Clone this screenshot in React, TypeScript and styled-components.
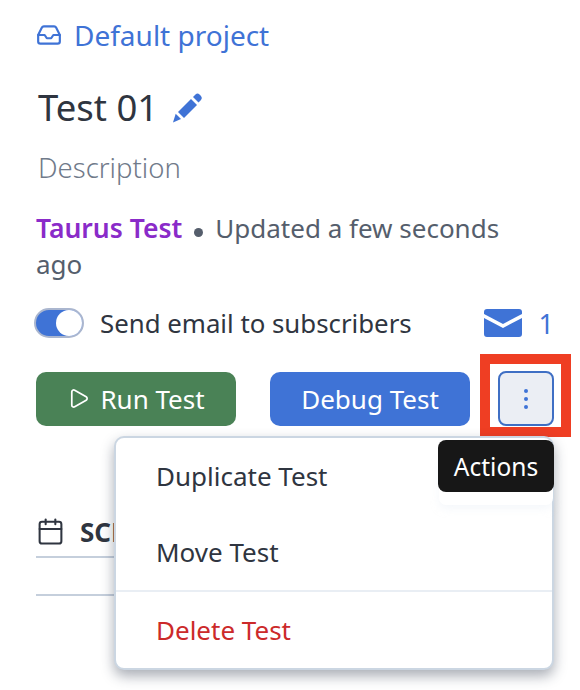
import { createGlobalStyle, styled } from "styled-components"
import { Calendar, Inbox, Play } from "lucide-react"

const GlobalStyle = createGlobalStyle`
  html, body {
    margin: 0;
    padding: 0;
    background: #fff;
    overflow: hidden;
  }
  body {
    font-family: "Noto Sans", "Open Sans", sans-serif;
  }
`

const Page = styled.div`
  position: relative;
  width: 580px;
  height: 690px;
  box-sizing: border-box;
  padding: 16px 26px 0 36px;
  overflow: hidden;
`

const ProjectLink = styled.a`
  display: flex;
  align-items: center;
  gap: 12px;
  height: 38px;
  color: #3f73d6;
  font-size: 28px;
`

const TitleRow = styled.div`
  display: flex;
  align-items: center;
  gap: 15px;
  margin: 30px 0 0 2px;
  height: 46px;
`

const Title = styled.h1`
  margin: 0;
  font-size: 36.5px;
  font-weight: 400;
  color: #2f3540;
`

const Description = styled.div`
  margin: 20px 0 0 2px;
  font-size: 27.5px;
  line-height: 36px;
  font-weight: 300;
  color: #707a8a;
`

const Meta = styled.div`
  margin-top: 24px;
  width: 490px;
  font-size: 26px;
  line-height: 36px;
  color: #555e6c;
`

const TestType = styled.span`
  color: #8a2bc9;
  font-weight: 600;
  font-size: 26.5px;
`

const Dot = styled.span`
  display: inline-block;
  width: 9px;
  height: 9px;
  margin: 0 12px 0 12px;
  border-radius: 50%;
  background: #555e6c;
  vertical-align: 1px;
`

const SubscribeRow = styled.div`
  display: flex;
  align-items: center;
  margin-top: 23px;
  height: 36px;
`

const Toggle = styled.div`
  display: flex;
  justify-content: flex-end;
  width: 50px;
  height: 30px;
  margin-left: -2px;
  box-sizing: border-box;
  border: 2px solid #aab6cf;
  border-radius: 15px;
  background: #3f73d6;
`

const Knob = styled.div`
  width: 26px;
  height: 26px;
  border-radius: 50%;
  background: #fff;
`

const SubscribeLabel = styled.span`
  margin-left: 16px;
  font-size: 25.8px;
  color: #2f3540;
`

const SubscriberCount = styled.div`
  display: flex;
  align-items: center;
  gap: 17px;
  margin-left: auto;
  color: #3f73d6;
  font-size: 27px;
`

const ButtonRow = styled.div`
  display: flex;
  align-items: center;
  margin-top: 30px;
`

const Button = styled.button<{ $bg: string; $width: number; $offset?: number }>`
  display: flex;
  align-items: center;
  justify-content: center;
  gap: 10px;
  width: ${(p) => p.$width}px;
  height: 54px;
  margin-left: ${(p) => p.$offset ?? 0}px;
  padding: 0;
  border: 0;
  border-radius: 10px;
  background: ${(p) => p.$bg};
  color: #fff;
  font-family: inherit;
  font-size: 26px;
`

const ActionsButton = styled.button`
  position: relative;
  display: flex;
  align-items: center;
  justify-content: center;
  width: 56px;
  height: 55px;
  margin-left: 28px;
  padding: 0;
  border: 2px solid #3f6fc4;
  border-radius: 8px;
  background: #ebeef4;

  &::after {
    content: "";
    position: absolute;
    inset: -19px -19px -13px -20px;
    border: 10px solid #ef3e23;
  }
`

const ScheduleHeader = styled.div`
  display: flex;
  align-items: center;
  gap: 15px;
  margin-top: 76px;
  height: 56px;
  padding-top: 5px;
  border-bottom: 2px solid #c5cfdc;
  box-sizing: border-box;
  color: #2f3540;
  font-size: 26px;
  font-weight: 700;
`

const ScheduleBody = styled.div`
  height: 38px;
  box-sizing: border-box;
  border-bottom: 2px solid #c5cfdc;
`

const Menu = styled.div`
  position: absolute;
  left: 114px;
  top: 436px;
  width: 440px;
  height: 234px;
  box-sizing: border-box;
  border: 2px solid #cbd6e2;
  border-radius: 10px;
  background: #fff;
  box-shadow: 0 6px 13px rgba(40, 50, 70, 0.4);
`

const MenuItem = styled.div<{ $danger?: boolean }>`
  display: flex;
  align-items: center;
  height: 76px;
  padding-left: 40px;
  font-size: 26px;
  color: ${(p) => (p.$danger ? "#cc2a2a" : "#2f3540")};
`

const MenuDivider = styled.div`
  height: 2px;
  background: #e9eef4;
`

const Tooltip = styled.div`
  position: absolute;
  left: 438px;
  top: 440px;
  display: flex;
  align-items: center;
  justify-content: center;
  width: 116px;
  height: 52px;
  border-radius: 8px;
  background: #171717;
  color: #fff;
  font-size: 24.5px;
  box-shadow: 0 14px 0 -1px #fff, 0 18px 10px -2px rgba(220, 228, 240, 0.35);
`

export default function App() {
  return (
    <Page>
      <GlobalStyle />
      <ProjectLink>
        <Inbox size={26} strokeWidth={2} />
        Default project
      </ProjectLink>
      <TitleRow>
        <Title>Test 01</Title>
        <svg width="31" height="31" viewBox="0 0 31 31" fill="#3f73d6">
          <path d="M0 30.5 2.7 21.7 8 27z" />
          <path d="M5 20 18 7l6 6-13 13z" />
          <path d="M20 5l2.5-2.5a3 3 0 0 1 4 0l1.5 1.5a3 3 0 0 1 0 4L25.5 10.5z" />
        </svg>
      </TitleRow>
      <Description>Description</Description>
      <Meta>
        <TestType>Taurus Test</TestType>
        <Dot />
        Updated a few seconds ago
      </Meta>
      <SubscribeRow>
        <Toggle>
          <Knob />
        </Toggle>
        <SubscribeLabel>Send email to subscribers</SubscribeLabel>
        <SubscriberCount>
          <svg width="38" height="28" viewBox="0 0 38 28" fill="#3f73d6">
            <path d="M3 0h32a3 3 0 0 1 3 3v2L19 15 0 5V3a3 3 0 0 1 3-3z" />
            <path d="M0 9l19 10 19-10v16a3 3 0 0 1-3 3H3a3 3 0 0 1-3-3z" />
          </svg>
          1
        </SubscriberCount>
      </SubscribeRow>
      <ButtonRow>
        <Button $bg="#4a8256" $width={200}>
          <Play size={23} strokeWidth={1.8} />
          Run Test
        </Button>
        <Button $bg="#3f73d6" $width={200} $offset={34}>
          Debug Test
        </Button>
        <ActionsButton aria-label="Actions">
          <svg width="6" height="22" viewBox="0 0 6 22" fill="#3f73d6">
            <circle cx="3" cy="3" r="2" />
            <circle cx="3" cy="11" r="2" />
            <circle cx="3" cy="19" r="2" />
          </svg>
        </ActionsButton>
      </ButtonRow>
      <ScheduleHeader>
        <Calendar size={29} strokeWidth={1.7} />
        SCHEDULES
      </ScheduleHeader>
      <ScheduleBody />
      <Menu>
        <MenuItem>Duplicate Test</MenuItem>
        <MenuItem>Move Test</MenuItem>
        <MenuDivider />
        <MenuItem $danger>Delete Test</MenuItem>
      </Menu>
      <Tooltip>Actions</Tooltip>
    </Page>
  )
}
